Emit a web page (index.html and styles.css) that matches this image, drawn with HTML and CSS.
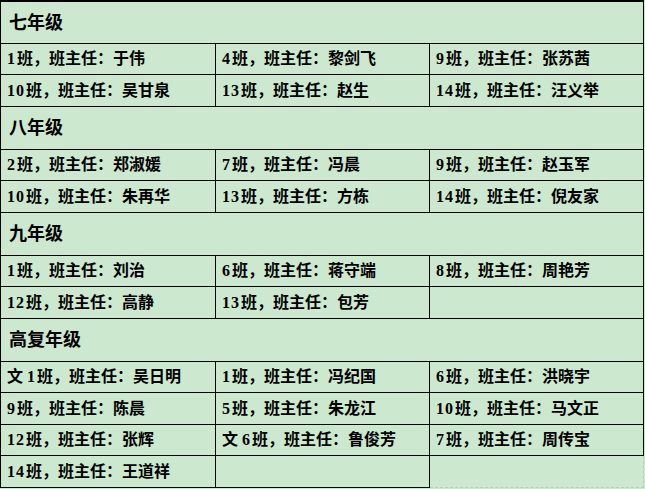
FILE: index.html
```html
<!DOCTYPE html>
<html lang="zh-CN">
<head>
<meta charset="utf-8">
<title>班主任名单</title>
<link rel="stylesheet" href="styles.css">
</head>
<body>
<table class="sheet">
  <colgroup><col class="c1"><col class="c2"><col class="c3"></colgroup>
  <tbody>
    <tr class="hdr first"><td colspan="3">七年级</td></tr>
    <tr class="ra"><td><span class="n">1</span>班，班主任：于伟</td><td><span class="n">4</span>班，班主任：黎剑飞</td><td><span class="n">9</span>班，班主任：张苏茜</td></tr>
    <tr class="rb"><td><span class="n">10</span>班，班主任：吴甘泉</td><td><span class="n">13</span>班，班主任：赵生</td><td><span class="n">14</span>班，班主任：汪义举</td></tr>
    <tr class="hdr"><td colspan="3">八年级</td></tr>
    <tr class="ra"><td><span class="n">2</span>班，班主任：郑淑媛</td><td><span class="n">7</span>班，班主任：冯晨</td><td><span class="n">9</span>班，班主任：赵玉军</td></tr>
    <tr class="rb"><td><span class="n">10</span>班，班主任：朱再华</td><td><span class="n">13</span>班，班主任：方栋</td><td><span class="n">14</span>班，班主任：倪友家</td></tr>
    <tr class="hdr"><td colspan="3">九年级</td></tr>
    <tr class="ra"><td><span class="n">1</span>班，班主任：刘治</td><td><span class="n">6</span>班，班主任：蒋守端</td><td><span class="n">8</span>班，班主任：周艳芳</td></tr>
    <tr class="rb"><td><span class="n">12</span>班，班主任：高静</td><td><span class="n">13</span>班，班主任：包芳</td><td></td></tr>
    <tr class="hdr"><td colspan="3">高复年级</td></tr>
    <tr class="ra"><td>文 <span class="n">1</span>班，班主任：吴日明</td><td><span class="n">1</span>班，班主任：冯纪国</td><td><span class="n">6</span>班，班主任：洪晓宇</td></tr>
    <tr class="rb"><td><span class="n">9</span>班，班主任：陈晨</td><td><span class="n">5</span>班，班主任：朱龙江</td><td><span class="n">10</span>班，班主任：马文正</td></tr>
    <tr class="ra"><td><span class="n">12</span>班，班主任：张辉</td><td>文 <span class="n">6</span>班，班主任：鲁俊芳</td><td><span class="n">7</span>班，班主任：周传宝</td></tr>
    <tr class="rb"><td><span class="n">14</span>班，班主任：王道祥</td><td></td><td class="open"></td></tr>
  </tbody>
</table>
</body>
</html>
```
FILE: styles.css
```css
html, body {
  margin: 0;
  padding: 0;
  background: #cce8cf;
}
.sheet {
  border-collapse: separate;
  border-spacing: 0;
  table-layout: fixed;
  width: 644px;
  background: #cce8cf;
  font-family: "Liberation Serif", "Noto Sans CJK SC", serif;
  font-weight: bold;
  color: #000;
}
.c1 { width: 216px; }
.c2 { width: 214px; }
.c3 { width: 214px; }
.sheet td {
  border-right: 1px solid #000;
  border-bottom: 1px solid #000;
  padding: 0 0 0 6px;
  font-size: 16px;
  line-height: 18px;
  vertical-align: middle;
  white-space: nowrap;
  overflow: hidden;
}
.sheet td:first-child {
  border-left: 1px solid #000;
}
.n {
  letter-spacing: 1px;
  padding-right: 1px;
}
.hdr { height: 43px; }
.hdr td {
  font-size: 18px;
  padding-left: 8px;
}
.first { height: 44px; }
.first td { border-top: 2px solid #000; }
.ra { height: 31px; }
.rb { height: 32px; }
.sheet td.open {
  border-right: 1px dashed #c4c4c4;
  border-bottom: 1px dashed #c4c4c4;
}
```
